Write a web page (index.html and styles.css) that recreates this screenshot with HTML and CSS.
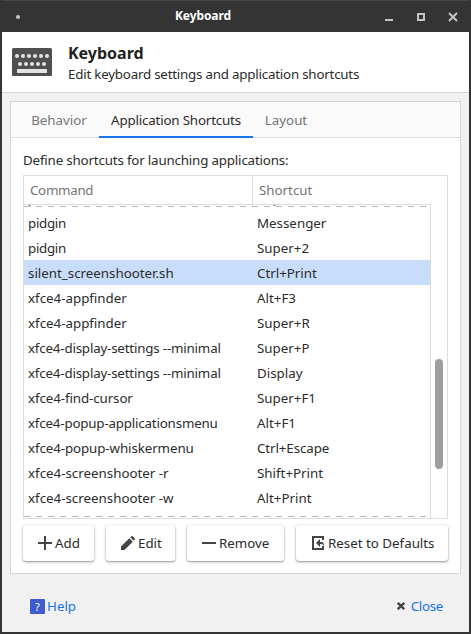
FILE: index.html
```html
<!DOCTYPE html>
<html lang="en">
<head>
<meta charset="utf-8">
<title>Keyboard</title>
<link rel="stylesheet" href="styles.css">
</head>
<body>
<div class="window">
  <div class="titlebar">
    <svg class="menu-dot" width="6" height="6" viewBox="0 0 6 6"><circle cx="3" cy="3" r="2.1" fill="#c4c4c2"/></svg>
    <div class="title">Keyboard</div>
    <svg class="controls" width="73" height="12" viewBox="0 0 73 12">
      <path d="M0 8h8v2H0z" fill="#c4c4c2"/>
      <path d="M33 3h6v6h-6z" fill="none" stroke="#c4c4c2" stroke-width="2"/>
      <path d="M64 2l8 8M72 2l-8 8" stroke="#c4c4c2" stroke-width="2"/>
    </svg>
  </div>
  <div class="header">
    <svg class="keyboard" width="40" height="28" viewBox="0 0 40 28">
      <rect width="40" height="28" rx="1.5" fill="#4f4f4f"/>
      <g fill="#e4e4e4">
        <circle cx="5" cy="8" r="2"/><circle cx="11" cy="8" r="2"/><circle cx="17" cy="8" r="2"/><circle cx="23" cy="8" r="2"/><circle cx="29" cy="8" r="2"/><circle cx="35" cy="8" r="2"/>
        <circle cx="8" cy="16" r="2"/><circle cx="14" cy="16" r="2"/><circle cx="20" cy="16" r="2"/><circle cx="26" cy="16" r="2"/><circle cx="32" cy="16" r="2"/>
        <rect x="5" y="21" width="30" height="4" rx=".5"/>
      </g>
    </svg>
    <div>
      <h1>Keyboard</h1>
      <p>Edit keyboard settings and application shortcuts</p>
    </div>
  </div>
  <div class="notebook">
    <div class="tabs">
      <div class="tab first">Behavior</div>
      <div class="tab active">Application Shortcuts</div>
      <div class="tab last">Layout</div>
    </div>
    <div class="page">
      <div class="caption">Define shortcuts for launching applications:</div>
      <div class="table">
        <div class="thead"><div class="hcell">Command</div><div class="hcell">Shortcut</div></div>
        <div class="tbody">
          <div class="list">
            <div class="row partial"><span>parole</span><span>Super+M</span></div>
            <div class="edge"></div>
            <div class="row"><span class="narrow">pidgin</span><span>Messenger</span></div>
            <div class="row"><span class="narrow">pidgin</span><span>Super+2</span></div>
            <div class="row selected"><span>silent_screenshooter.sh</span><span>Ctrl+Print</span></div>
            <div class="row"><span>xfce4-appfinder</span><span>Alt+F3</span></div>
            <div class="row"><span>xfce4-appfinder</span><span>Super+R</span></div>
            <div class="row"><span class="tight">xfce4-display-settings --minimal</span><span>Super+P</span></div>
            <div class="row"><span class="tight">xfce4-display-settings --minimal</span><span>Display</span></div>
            <div class="row"><span class="snug">xfce4-find-cursor</span><span>Super+F1</span></div>
            <div class="row"><span class="tight">xfce4-popup-applicationsmenu</span><span>Alt+F1</span></div>
            <div class="row"><span class="snug">xfce4-popup-whiskermenu</span><span class="snug">Ctrl+Escape</span></div>
            <div class="row"><span>xfce4-screenshooter -r</span><span>Shift+Print</span></div>
            <div class="row"><span>xfce4-screenshooter -w</span><span>Alt+Print</span></div>
            <div class="edge bottom"></div>
          </div>
          <div class="scroll"><div class="thumb"></div></div>
        </div>
      </div>
      <div class="buttons">
        <div class="btn add"><svg width="16" height="16" viewBox="0 0 16 16"><path d="M7 1h2v6h6v2H9v6H7V9H1V7h6z"/></svg>Add</div>
        <div class="btn edit"><svg width="16" height="16" viewBox="0 0 16 16"><path d="M1 15v-3.500L9.300 3.200l3.500 3.500L4.500 15zM10.200 2.300l1.200-1.100q.6-.5 1.200 0l2.200 2.200q.5.600 0 1.200l-1.100 1.200z"/></svg>Edit</div>
        <div class="btn remove"><svg width="16" height="16" viewBox="0 0 16 16"><path d="M1 7h14v2H1z"/></svg>Remove</div>
        <div class="btn reset"><svg width="16" height="16" viewBox="0 0 16 16"><path d="M2 1h12v4h-2V3H4v10h8v-2h2v4H2zM6 8l4-4v3h1q3 0 3 3v1q-.6-2-3-2h-1v3z"/></svg>Reset to Defaults</div>
      </div>
    </div>
  </div>
  <div class="footer">
    <div class="help"><span class="help-icon">?</span>Help</div>
    <div class="close"><svg width="8" height="8" viewBox="0 0 8 8"><path d="M.8.8l6.400 6.400M7.200.8L.8 7.200" stroke="#444" stroke-width="2.300"/></svg>Close</div>
  </div>
</div>
</body>
</html>
```
FILE: styles.css
```css
* { box-sizing: border-box; }
body { margin: 0; font: 13.333px/20px "Noto Sans", sans-serif; color: #2b2b2b; }
h1, p { margin: 0; }
.window { width: 471px; height: 634px; background: #f1f1f1; border: solid #343434; border-width: 0 2px 2px; display: flex; flex-direction: column; overflow: hidden; white-space: nowrap; }
.titlebar { height: 32px; flex: none; background: #343434; border-top: 1px solid #464646; margin: 0 -2px; display: grid; grid-template-columns: 73px 1fr 73px; align-items: center; padding: 0 13px 0 15px; }
.title { color: #fff; font-weight: 700; font-size: 12px; line-height: 18px; padding: 0 0 2px 87px; letter-spacing: -.1px; }
.header { height: 61px; flex: none; background: #fff; border-bottom: 1px solid #d4d4d4; display: flex; padding: 10px 10px 0; }
.keyboard { margin: 6px 16px 0 0; }
.header p { letter-spacing: -.21px; }
h1 { font-size: 16px; line-height: 22px; color: #222; }
.notebook { width: 451px; height: 473px; flex: none; margin: 8px 0 0 8px; background: #fff; border: 1px solid #d4d4d4; }
.tabs { height: 36px; display: flex; background: #fafafa; border-bottom: 1px solid #d9d9d9; color: #757575; line-height: 36px; }
.tab { height: 36px; text-align: center; }
.tab.first { width: 88px; padding-left: 8px; }
.tab.active { width: 154px; color: #2b2b2b; border-bottom: 2px solid #1a73e8; letter-spacing: -.17px; }
.tab.last { width: 66px; }
.page { padding: 12px 12px 0; }
.caption { height: 25px; line-height: 21px; letter-spacing: -.17px; }
.table { width: 425px; height: 344px; border: 1px solid #dcdcdc; }
.thead { height: 29px; display: flex; border-bottom: 1px solid #dcdcdc; margin-right: 16px; color: #757575; line-height: 28px; }
.hcell { padding-left: 6px; }
.hcell:first-child { width: 229px; border-right: 1px solid #dcdcdc; letter-spacing: -.3px; }
.tbody { height: 313px; display: flex; }
.list { width: 407px; border-right: 1px solid #dcdcdc; overflow: hidden; }
.row { height: 25px; display: grid; grid-template-columns: 229px 1fr; padding-left: 4px; line-height: 27px; }
.row.selected { background: #c8ddf9; }
.row.partial { height: 1px; align-content: end; overflow: hidden; line-height: 16px; }
.tight { letter-spacing: -.18px; }
.snug { letter-spacing: -.09px; }
.narrow { letter-spacing: -.3px; }
.edge { height: 4px; background: repeating-linear-gradient(90deg, #b9b9b9 0 6px, transparent 6px 12px) 0 0 / 100% 1px no-repeat; }
.edge.bottom { height: 2px; margin-top: 6px; }
.scroll { padding: 154px 0 0 4px; }
.thumb { width: 8px; height: 110px; border-radius: 4px; background: #9e9e9e; }
.buttons { display: flex; gap: 12px; padding-top: 6px; }
.btn { height: 36px; display: flex; align-items: center; padding-left: 14px; border-radius: 3px; background: #fff; box-shadow: 0 1px 2px rgba(0,0,0,.35), 0 0 2px rgba(0,0,0,.12), 0 2px 5px rgba(0,0,0,.08); }
.btn svg { fill: #444; margin-right: 2px; flex: none; }
.add { width: 71px; }
.edit { width: 69px; }
.remove { width: 97px; }
.reset { width: 152px; }
.footer { display: flex; justify-content: space-between; padding: 22px 26px 0 28px; color: #1a73e8; }
.help, .close { display: flex; align-items: center; }
.close { letter-spacing: -.3px; }
.help-icon { width: 15px; height: 15px; margin-right: 2px; border-radius: 1px; background: #3f5bd0; color: #fff; font-size: 11px; line-height: 15px; text-align: center; }
.close svg { margin-right: 6px; }
```
